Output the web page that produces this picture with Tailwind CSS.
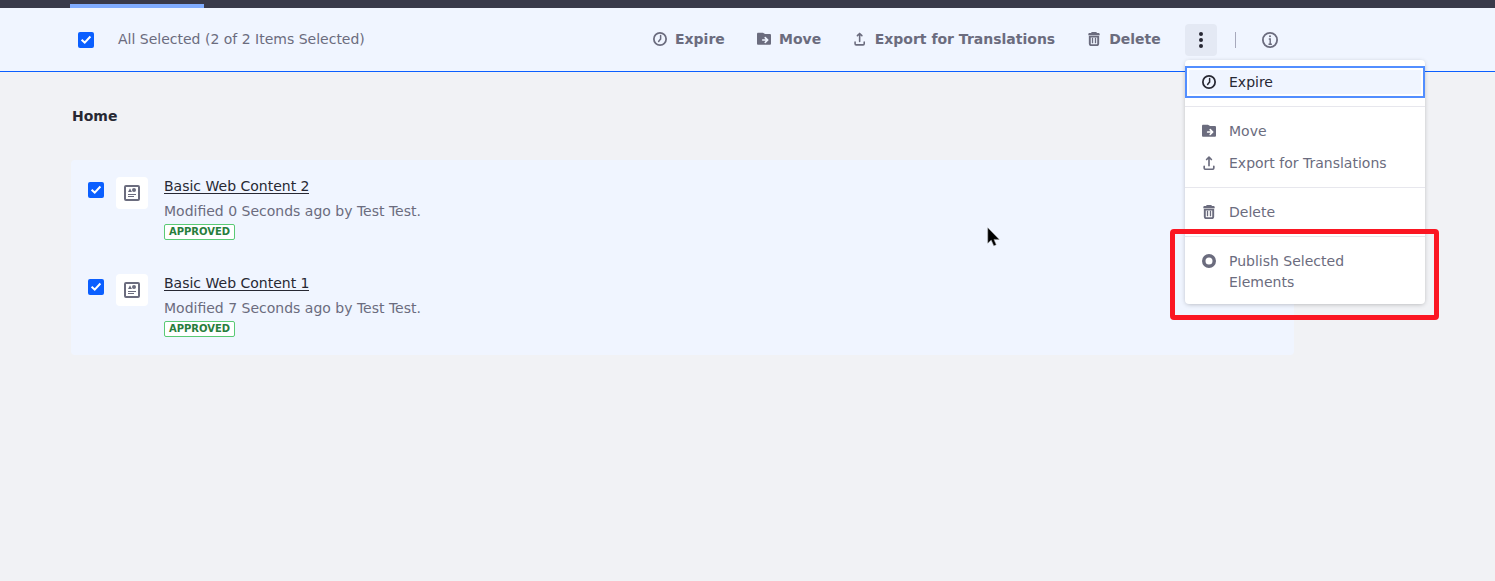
<!DOCTYPE html>
<html lang="en">
<head>
<meta charset="utf-8">
<title>Web Content</title>
<script src="https://cdn.jsdelivr.net/npm/@tailwindcss/browser@4"></script>
</head>
<body class="relative h-[581px] overflow-hidden bg-[#f1f2f5] font-['DejaVu_Sans',sans-serif] text-sm leading-[21px] text-[#6b6c7e]">
<svg class="hidden">
  <symbol id="clock" viewBox="0 0 16 16"><circle cx="8" cy="8" r="7" fill="none" stroke="currentColor" stroke-width="2"/><path d="M8.700 4v4.300M8.400 8.200 6.400 10.800" fill="none" stroke="currentColor" stroke-width="1.700" stroke-linecap="round"/></symbol>
  <symbol id="move" viewBox="0 0 16 16"><path fill="currentColor" fill-rule="evenodd" d="M0 2.200C0 1.400.6.900 1.400.900H6.800L9.200 2.400h5.400c.8 0 1.400.6 1.400 1.400v9.400c0 .8-.6 1.400-1.400 1.400H1.400C.6 14.600 0 14 0 13.200zM6.500 8.200c-1.300 0-1.300 1.900 0 1.900h3.400L8.700 11.300c-.8.900.5 2.100 1.300 1.300l2.900-2.800c.4-.4.4-.9 0-1.300L10 5.700c-.8-.8-2.100.4-1.300 1.300l1.200 1.200z"/></symbol>
  <symbol id="export" viewBox="0 0 16 16"><path d="M8 11V1.800M5.300 4 8 1.300 10.700 4M2.500 11.800v2c0 .8.500 1.300 1.300 1.300h8.400c.8 0 1.300-.5 1.300-1.300v-2" fill="none" stroke="currentColor" stroke-width="1.900" stroke-linecap="round" stroke-linejoin="round"/></symbol>
  <symbol id="trash" viewBox="0 0 16 16"><path fill="currentColor" d="M5 0h6v1h2c.8 0 1.500.6 1.500 1.300v1.300h-13V2.300C1.500 1.600 2.200 1 3 1h2z"/><path d="M3.200 5.300v8.200c0 1 .6 1.500 1.600 1.500h6.400c1 0 1.600-.5 1.600-1.500V5.300z" fill="none" stroke="currentColor" stroke-width="2.200"/><path d="M6.300 6.600v6.200M9.700 6.600v6.200" stroke="currentColor" stroke-width="1.500"/></symbol>
  <symbol id="ring" viewBox="0 0 16 16"><circle cx="8" cy="8" r="6" fill="none" stroke="currentColor" stroke-width="4"/></symbol>
  <symbol id="check" viewBox="0 0 16 16"><path d="M3.600 7.800 6.700 10.600 12.400 4.500" fill="none" stroke="white" stroke-width="2"/></symbol>
  <symbol id="content" viewBox="0 0 16 16"><rect x="1" y="1" width="14" height="14" rx="1" fill="none" stroke="currentColor" stroke-width="2"/><path fill="currentColor" d="M4 7 6 3.200 8 7z"/><circle cx="10" cy="5" r="2" fill="currentColor"/><path d="M4 9.500h8M4 11.500h6" stroke="currentColor" stroke-width="1"/></symbol>
</svg>

<header class="h-2 bg-[#393a4a] pl-[70px] pt-1"><div class="h-1 w-[134px] bg-[#80acff]"></div></header>

<nav class="flex h-16 items-start border-b border-[#0b5fff] bg-[#f0f5ff] pl-[78px] pt-4">
  <span class="mt-2 size-4 rounded-[2px] bg-[#0b5fff]"><svg class="size-4"><use href="#check"/></svg></span>
  <span class="ml-6 mt-[5px] w-[535px]">All Selected (2 of 2 Items Selected)</span>
  <div class="mt-[5px] flex w-[508px] gap-8 whitespace-nowrap font-bold">
    <span class="flex w-[72px] gap-2"><svg class="mt-[3px] size-3.5"><use href="#clock"/></svg>Expire</span>
    <span class="flex w-[64.400px] gap-2"><svg class="mt-[3px] size-3.5"><use href="#move"/></svg>Move</span>
    <span class="flex w-[201.800px] gap-2"><svg class="mt-[3px] size-3.5"><use href="#export"/></svg>Export for Translations</span>
    <span class="flex gap-2"><svg class="mt-[3px] size-3.5"><use href="#trash"/></svg>Delete</span>
  </div>
  <span class="ml-6 flex size-8 items-center justify-center rounded bg-[#e4e9f4] text-[#272833]">
    <svg class="size-4" viewBox="0 0 16 16" fill="currentColor"><circle cx="8" cy="2" r="2"/><circle cx="8" cy="8" r="2"/><circle cx="8" cy="14" r="2"/></svg>
  </span>
  <span class="ml-[18px] mt-2 h-4 w-px bg-[#a7a9bc]"></span>
  <svg class="ml-[26px] mt-2 size-4" viewBox="0 0 16 16"><circle cx="8" cy="8" r="7.100" fill="none" stroke="currentColor" stroke-width="1.800"/><circle cx="8" cy="4.300" r="1" fill="currentColor"/><path d="M6.800 7H8.200v5M6.500 12.200h3.400" fill="none" stroke="currentColor" stroke-width="1.400"/></svg>
</nav>

<main class="pl-[71px] pt-[34px]">
  <h1 class="pl-px font-bold text-[#272833]">Home</h1>
  <ul class="mt-[33px] w-[1223px] rounded bg-[#f0f5ff]">
    <li class="flex h-[97px] pl-[17px] pt-[15px]">
      <span class="mt-[7px] size-4 rounded-[2px] bg-[#0b5fff]"><svg class="size-4"><use href="#check"/></svg></span>
      <span class="ml-3 mt-[2px] flex size-8 items-center justify-center rounded bg-white"><svg class="size-4"><use href="#content"/></svg></span>
      <div class="ml-4">
        <a class="block h-[19px] w-[145px] whitespace-nowrap border-b border-[#272833] pt-px text-[#272833]">Basic Web Content 2</a>
        <p class="mt-[7px]">Modified 0 Seconds ago by Test Test.</p>
        <span class="mt-[2px] block h-4 w-[71px] rounded-[2px] border border-[#5aca75] bg-white text-center text-[10px] font-bold leading-[13px] text-[#287d3c]">APPROVED</span>
      </div>
    </li>
    <li class="flex h-[98px] pl-[17px] pt-[15px]">
      <span class="mt-[7px] size-4 rounded-[2px] bg-[#0b5fff]"><svg class="size-4"><use href="#check"/></svg></span>
      <span class="ml-3 mt-[2px] flex size-8 items-center justify-center rounded bg-white"><svg class="size-4"><use href="#content"/></svg></span>
      <div class="ml-4">
        <a class="block h-[19px] w-[145px] whitespace-nowrap border-b border-[#272833] pt-px text-[#272833]">Basic Web Content 1</a>
        <p class="mt-[7px]">Modified 7 Seconds ago by Test Test.</p>
        <span class="mt-[2px] block h-4 w-[71px] rounded-[2px] border border-[#5aca75] bg-white text-center text-[10px] font-bold leading-[13px] text-[#287d3c]">APPROVED</span>
      </div>
    </li>
  </ul>
</main>

<div class="absolute left-[1185px] top-[60px] w-60 rounded bg-white py-1.5 shadow-[0_1px_5px_-1px_rgba(0,0,0,0.3)]">
  <div class="flex h-8 gap-[13px] border-2 border-[#528eff] bg-[#f0f5ff] pl-[15px] pt-1 text-[#272833] shadow-[inset_0_0_0_2px_white]"><svg class="mt-[3px] size-3.5"><use href="#clock"/></svg>Expire</div>
  <hr class="my-2 border-[#e7e7ed]">
  <div class="flex h-8 gap-[13px] pl-[17px] pt-1.5"><svg class="mt-[3px] size-3.5"><use href="#move"/></svg>Move</div>
  <div class="flex h-8 gap-[13px] pl-[17px] pt-1.5"><svg class="mt-[3px] size-3.5"><use href="#export"/></svg>Export for Translations</div>
  <hr class="my-2 border-[#e7e7ed]">
  <div class="flex h-8 gap-[13px] pl-[17px] pt-1.5"><svg class="mt-[3px] size-3.5"><use href="#trash"/></svg>Delete</div>
  <hr class="my-2 border-[#e7e7ed]">
  <div class="flex h-[53px] gap-[13px] pl-[17px] pt-1.5"><svg class="mt-[3px] size-3.5 shrink-0"><use href="#ring"/></svg><span>Publish Selected<br>Elements</span></div>
</div>

<div class="absolute left-[1170px] top-[229px] h-[91px] w-[269px] rounded-[4px] border-5 border-[#fb1622]"></div>

<svg class="absolute left-[987px] top-[227px] h-[20px] w-[14px]" viewBox="0 0 14 20"><path d="M.8.8v15.400l3.400-3.200 2.600 5.800 2.400-1L6.900 12.400h5.300z" fill="#000" stroke="#999" stroke-width=".5"/></svg>
</body>
</html>
